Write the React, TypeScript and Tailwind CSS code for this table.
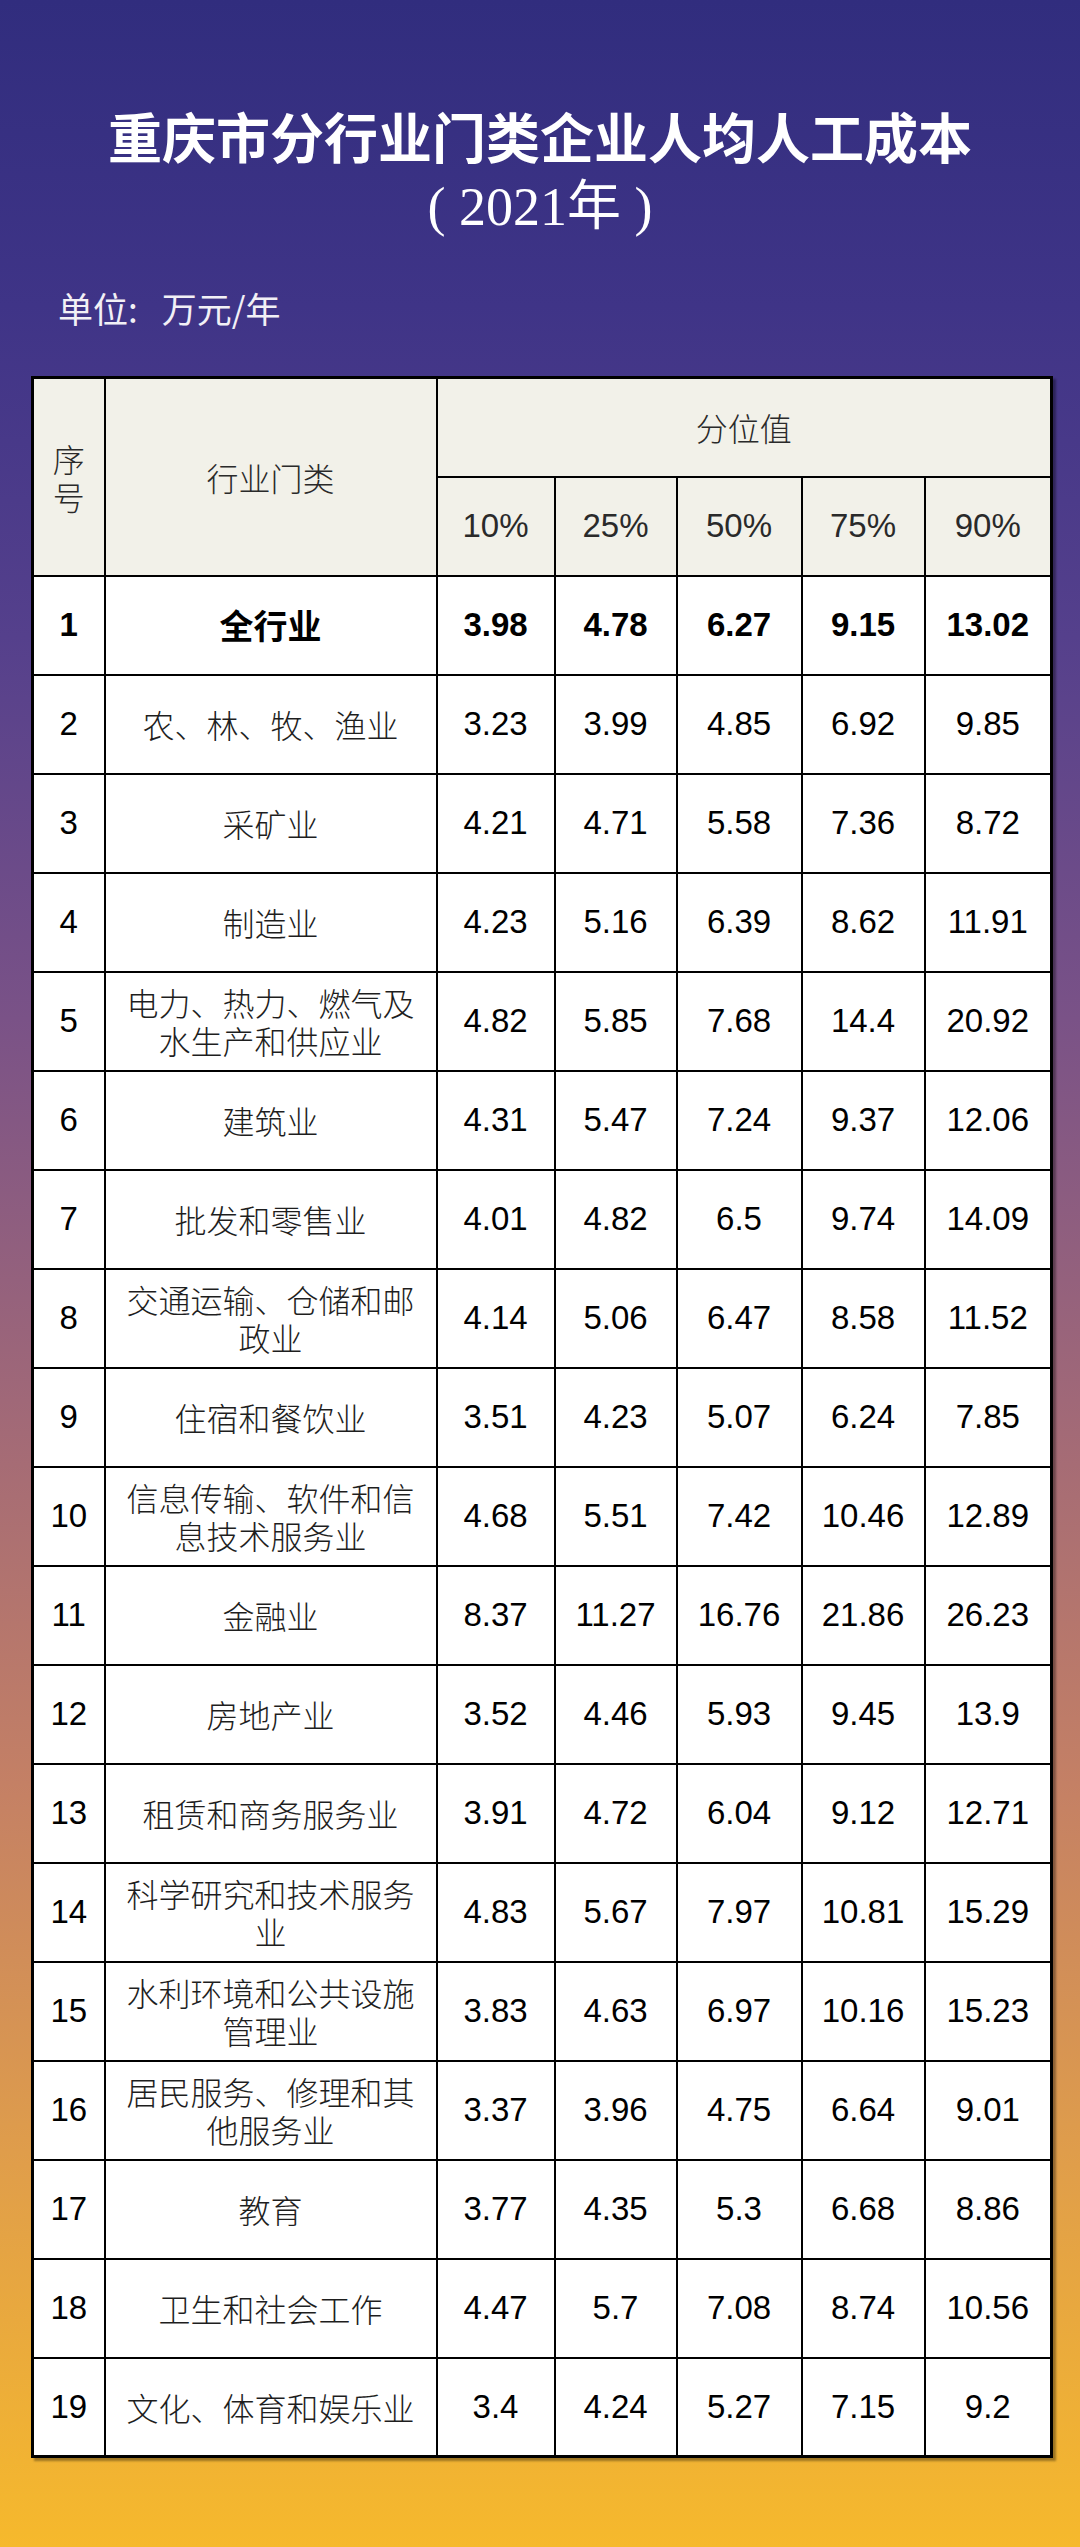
const rows: [number, string, string, string, string, string, string][] = [
  [1, "全行业", "3.98", "4.78", "6.27", "9.15", "13.02"],
  [2, "农、林、牧、渔业", "3.23", "3.99", "4.85", "6.92", "9.85"],
  [3, "采矿业", "4.21", "4.71", "5.58", "7.36", "8.72"],
  [4, "制造业", "4.23", "5.16", "6.39", "8.62", "11.91"],
  [5, "电力、热力、燃气及水生产和供应业", "4.82", "5.85", "7.68", "14.4", "20.92"],
  [6, "建筑业", "4.31", "5.47", "7.24", "9.37", "12.06"],
  [7, "批发和零售业", "4.01", "4.82", "6.5", "9.74", "14.09"],
  [8, "交通运输、仓储和邮政业", "4.14", "5.06", "6.47", "8.58", "11.52"],
  [9, "住宿和餐饮业", "3.51", "4.23", "5.07", "6.24", "7.85"],
  [10, "信息传输、软件和信息技术服务业", "4.68", "5.51", "7.42", "10.46", "12.89"],
  [11, "金融业", "8.37", "11.27", "16.76", "21.86", "26.23"],
  [12, "房地产业", "3.52", "4.46", "5.93", "9.45", "13.9"],
  [13, "租赁和商务服务业", "3.91", "4.72", "6.04", "9.12", "12.71"],
  [14, "科学研究和技术服务业", "4.83", "5.67", "7.97", "10.81", "15.29"],
  [15, "水利环境和公共设施管理业", "3.83", "4.63", "6.97", "10.16", "15.23"],
  [16, "居民服务、修理和其他服务业", "3.37", "3.96", "4.75", "6.64", "9.01"],
  [17, "教育", "3.77", "4.35", "5.3", "6.68", "8.86"],
  [18, "卫生和社会工作", "4.47", "5.7", "7.08", "8.74", "10.56"],
  [19, "文化、体育和娱乐业", "3.4", "4.24", "5.27", "7.15", "9.2"],
];

const cjk = "font-['Noto_Sans_CJK_SC',sans-serif]";
const num = "font-['Liberation_Sans','Noto_Sans_CJK_SC',sans-serif]";

export default function App() {
  return (
    <div className="w-[1080px] h-[2547px] bg-[linear-gradient(to_bottom,#312d7e_0%,#3f3487_12%,#55408c_25%,#7a5287_40%,#a06878_55%,#c48065_70%,#e09e4a_85%,#f6b92c_100%)] pt-[109px]">
      <h1 className={`${cjk} text-center text-white font-bold text-[54px] leading-none`}>
        重庆市分行业门类企业人均人工成本
      </h1>
      <p className="mt-[17px] text-center text-white text-[54px] leading-none font-['Liberation_Serif','Noto_Sans_CJK_SC',serif]">
        ( 2021年 )
      </p>
      <p className={`${cjk} mt-[56px] ml-[58px] text-[35px] leading-none text-[#f2f0f6]`}>
        单位:<span className="ml-[24px]">万元/年</span>
      </p>

      <table className="mt-[51px] ml-[31px] w-[1019px] table-fixed border-collapse border-[3px] border-black shadow-[3px_3px_2px_rgba(0,0,0,0.35)]">
        <colgroup>
          <col className="w-[72px]" />
          <col className="w-[332px]" />
          <col className="w-[118px]" />
          <col className="w-[122px]" />
          <col className="w-[125px]" />
          <col className="w-[123px]" />
          <col className="w-[127px]" />
        </colgroup>
        <thead className="bg-[#f2f1e9] text-[#2a2a2a]">
          <tr className="h-[99px]">
            <th rowSpan={2} className={`${cjk} border-2 border-black px-[8px] font-light text-[32px] leading-[38px]`}>
              序号
            </th>
            <th rowSpan={2} className={`${cjk} border-2 border-black font-light text-[32px]`}>
              行业门类
            </th>
            <th colSpan={5} className={`${cjk} border-2 border-black font-light text-[32px]`}>
              分位值
            </th>
          </tr>
          <tr className="h-[99px]">
            {["10%", "25%", "50%", "75%", "90%"].map(p => (
              <th key={p} className={`${num} border-2 border-black font-normal text-[33px]`}>
                {p}
              </th>
            ))}
          </tr>
        </thead>
        <tbody className="bg-white text-black">
          {rows.map(([id, name, ...vals]) => {
            const bold = id === 1;
            return (
              <tr key={id} className="h-[99px]">
                <td className={`${num} border-2 border-black text-center text-[33px] ${bold ? "font-bold" : ""}`}>
                  {id}
                </td>
                <td
                  className={`${cjk} border-2 border-black text-center px-[16px] leading-[38px] ${
                    bold ? "font-bold text-[34px]" : "font-light text-[32px] text-[#1e1e1e]"
                  }`}
                >
                  {name}
                </td>
                {vals.map((v, i) => (
                  <td key={i} className={`${num} border-2 border-black text-center text-[33px] ${bold ? "font-bold" : ""}`}>
                    {v}
                  </td>
                ))}
              </tr>
            );
          })}
        </tbody>
      </table>
    </div>
  );
}
